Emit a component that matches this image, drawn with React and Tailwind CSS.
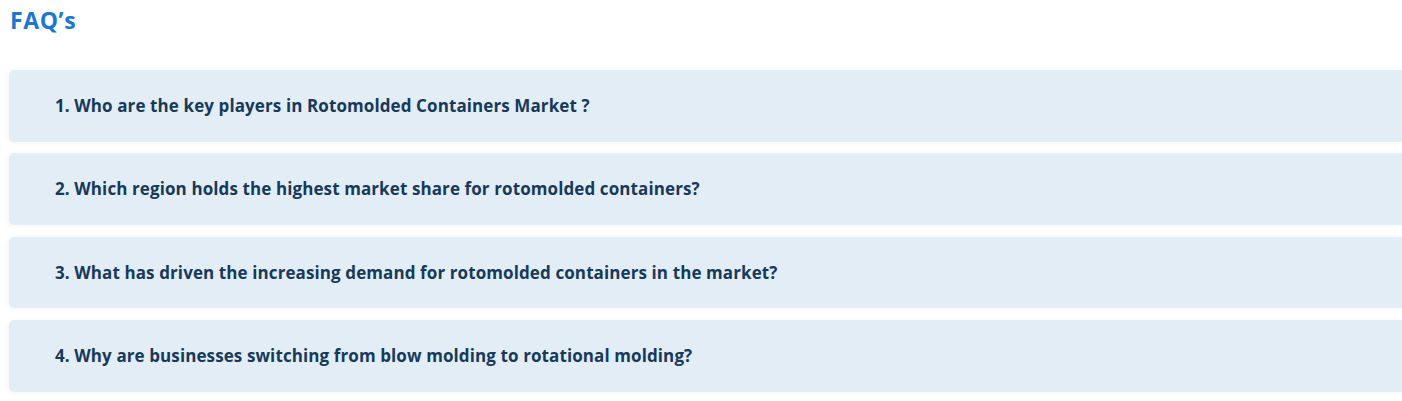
import React from 'react';

const faqs = [
  '1. Who are the key players in Rotomolded Containers Market ?',
  '2. Which region holds the highest market share for rotomolded containers?',
  '3. What has driven the increasing demand for rotomolded containers in the market?',
  '4. Why are businesses switching from blow molding to rotational molding?',
];

const App = () => {
  return (
    <div className="w-full overflow-hidden bg-white font-['Open_Sans','Lato',sans-serif] pt-[4px] pb-[10px]">
      <h2 className="pl-[10px] text-[23px] leading-[32px] font-bold tracking-[0.6px] text-[#1a78d2]">FAQ’s</h2>
      <div className="mt-[34px] pl-[9px] flex flex-col gap-[11.4px]">
        {faqs.map((q) => (
          <div
            key={q}
            className="mr-[-20px] h-[71.9px] flex items-center rounded-[5px] bg-[#e3edf6] pl-[46px] shadow-[-2px_1px_6px_rgba(0,0,0,0.04)]"
          >
            <p className="text-[17px] tracking-[0.1px] font-bold text-[#17395a]">{q}</p>
          </div>
        ))}
      </div>
    </div>
  );
};

export default App;
